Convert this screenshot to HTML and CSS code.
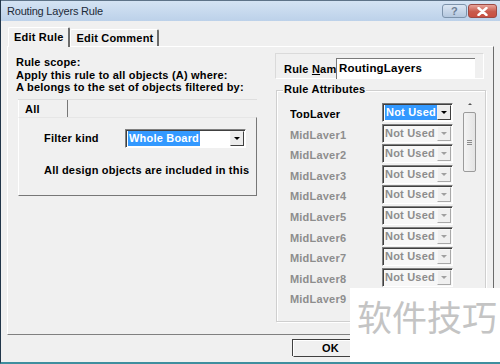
FILE: index.html
```html
<!DOCTYPE html>
<html lang="en">
<head>
    <meta charset="UTF-8">
    <meta name="viewport" content="width=device-width, initial-scale=1.0">
    <title>Routing Layers Rule</title>
    <link rel="stylesheet" href="styles.css">
</head>
<body>
    <div class="dialog">
        <!-- Title bar -->
        <div class="titlebar">
            <span class="title">Routing Layers Rule</span>
            <div class="caption-buttons">
                <div class="cap-btn cap-help">?</div>
                <div class="cap-btn cap-close">
                    <svg width="11" height="9" viewBox="0 0 11 9">
                        <path d="M1.5 1 L9.5 8 M9.5 1 L1.5 8" stroke="#fff" stroke-width="2.4" stroke-linecap="round"/>
                    </svg>
                </div>
            </div>
        </div>

        <div class="client">
            <div class="tabs">
                <div class="tab active">Edit Rule</div>
                <div class="tab">Edit Comment</div>
            </div>

            <div class="tab-page">
                <!-- Rule scope -->
                <div class="scope">
                    <div class="scope-text">
                        <div>Rule scope:</div>
                        <div>Apply this rule to all objects (A) where:</div>
                        <div>A belongs to the set of objects filtered by:</div>
                    </div>
                    <div class="filter">
                        <div class="subtabs">
                            <div class="subtab">All</div>
                        </div>
                        <div class="filter-page">
                            <div class="filter-row">
                                <span class="filter-label">Filter kind</span>
                                <div class="combo combo-wide">
                                    <div class="combo-text"><span class="selected">Whole Board</span></div>
                                    <div class="combo-arrow"><span class="tri"></span></div>
                                </div>
                            </div>
                            <div class="filter-note">All design objects are included in this</div>
                        </div>
                    </div>
                </div>

                <!-- Rule attributes -->
                <div class="attrs">
                    <div class="name-box">
                        <span class="name-label">Rule <u>N</u>am</span>
                        <div class="name-input">RoutingLayers</div>
                    </div>
                    <div class="group">
                        <div class="group-title">Rule Attributes</div>
                        <div class="group-body">
                            <div class="layer-list">
                                <div class="layer-row">
                                    <span class="layer-name">TopLayer</span>
                                    <div class="combo">
                                        <div class="combo-text"><span class="selected">Not Used</span></div>
                                        <div class="combo-arrow"><span class="tri"></span></div>
                                    </div>
                                </div>
                                <div class="layer-row disabled">
                                    <span class="layer-name">MidLayer1</span>
                                    <div class="combo">
                                        <div class="combo-text">Not Used</div>
                                        <div class="combo-arrow"><span class="tri"></span></div>
                                    </div>
                                </div>
                                <div class="layer-row disabled">
                                    <span class="layer-name">MidLayer2</span>
                                    <div class="combo">
                                        <div class="combo-text">Not Used</div>
                                        <div class="combo-arrow"><span class="tri"></span></div>
                                    </div>
                                </div>
                                <div class="layer-row disabled">
                                    <span class="layer-name">MidLayer3</span>
                                    <div class="combo">
                                        <div class="combo-text">Not Used</div>
                                        <div class="combo-arrow"><span class="tri"></span></div>
                                    </div>
                                </div>
                                <div class="layer-row disabled">
                                    <span class="layer-name">MidLayer4</span>
                                    <div class="combo">
                                        <div class="combo-text">Not Used</div>
                                        <div class="combo-arrow"><span class="tri"></span></div>
                                    </div>
                                </div>
                                <div class="layer-row disabled">
                                    <span class="layer-name">MidLayer5</span>
                                    <div class="combo">
                                        <div class="combo-text">Not Used</div>
                                        <div class="combo-arrow"><span class="tri"></span></div>
                                    </div>
                                </div>
                                <div class="layer-row disabled">
                                    <span class="layer-name">MidLayer6</span>
                                    <div class="combo">
                                        <div class="combo-text">Not Used</div>
                                        <div class="combo-arrow"><span class="tri"></span></div>
                                    </div>
                                </div>
                                <div class="layer-row disabled">
                                    <span class="layer-name">MidLayer7</span>
                                    <div class="combo">
                                        <div class="combo-text">Not Used</div>
                                        <div class="combo-arrow"><span class="tri"></span></div>
                                    </div>
                                </div>
                                <div class="layer-row disabled">
                                    <span class="layer-name">MidLayer8</span>
                                    <div class="combo">
                                        <div class="combo-text">Not Used</div>
                                        <div class="combo-arrow"><span class="tri"></span></div>
                                    </div>
                                </div>
                                <div class="layer-row disabled">
                                    <span class="layer-name">MidLayer9</span>
                                    <div class="combo">
                                        <div class="combo-text">Not Used</div>
                                        <div class="combo-arrow"><span class="tri"></span></div>
                                    </div>
                                </div>
                            </div>
                            <div class="scrollbar">
                                <span class="scroll-up"></span>
                                <div class="scroll-thumb">
                                    <span class="grip"></span>
                                    <span class="grip"></span>
                                    <span class="grip"></span>
                                </div>
                            </div>
                        </div>
                    </div>
                </div>
            </div>

            <div class="footer">
                <div class="btn">OK</div>
                <div class="btn">Cancel</div>
            </div>
        </div>

        <!-- watermark overlay (over the picture) -->
        <div class="watermark">软件技巧</div>
    </div>
</body>
</html>
```

FILE: styles.css
```css
/* Routing Layers Rule dialog */

body {
    margin: 0;
    width: 500px;
    height: 364px;
    overflow: hidden;
    background: #f0f0f0;
    font-family: "Liberation Sans", Arial, sans-serif;
    font-size: 11px;
    font-weight: bold;
    letter-spacing: 0.2px;
    color: #000;
}

.dialog {
    position: relative;
    height: 364px;
    box-sizing: border-box;
    border-left: 1px solid #22364a;
    border-bottom: 2px solid #3f8e9e;
    background: #f0f0f0;
    overflow: hidden;
}

/* Title bar */
.titlebar {
    height: 21px;
    box-sizing: border-box;
    border-top: 1px solid #5e7388;
    background: linear-gradient(#d4e3f3, #bcd1e9);
    display: flex;
    align-items: center;
    padding-left: 6px;
}

.title {
    font-weight: normal;
    letter-spacing: -0.2px;
    color: #1c2a38;
    flex: 1;
}

.caption-buttons {
    display: flex;
    gap: 1px;
    margin-right: 3px;
    align-self: flex-start;
    margin-top: 3px;
}

.cap-btn {
    height: 14px;
    box-sizing: border-box;
    border: 1px solid #7d93ab;
    border-radius: 3px;
    display: flex;
    align-items: center;
    justify-content: center;
}

.cap-help {
    width: 25px;
    background: linear-gradient(#dbe6f3, #b4c7de);
    color: #6d7f95;
    font-size: 11px;
}

.cap-close {
    width: 29px;
    border-color: #9c4a44;
    background: linear-gradient(#e8a59b, #c85a4c 55%, #c94f41);
}

/* Client area */
.client {
    padding: 6px 6px 0 6px;
}

.tabs {
    display: flex;
    align-items: flex-end;
    height: 19px;
    padding-left: 1px;
}

.tab {
    height: 17px;
    box-sizing: border-box;
    padding: 2px 4px 0 5px;
    border-top: 1px solid #fff;
    border-left: 1px solid #fff;
    border-right: 2px solid #6b6b6b;
    border-radius: 2px 2px 0 0;
    line-height: 13px;
}

.tab.active {
    height: 20px;
    padding: 3px 5px 0 5px;
    margin-bottom: -1px;
    position: relative;
    z-index: 1;
    background: #f0f0f0;
}

.tab-page {
    height: 289px;
    box-sizing: border-box;
    border: 1px solid;
    border-color: #fff #6b6b6b #808080 #fff;
    display: grid;
    grid-template-columns: 250px 1fr;
    gap: 9px;
    padding: 9px 3px 0 8px;
}

/* Left: rule scope */
.scope-text {
    line-height: 12.5px;
}

.filter {
    margin-top: 5px;
    margin-left: 2px;
    border-top: 1px solid #dedede;
    width: 239px;
}

.subtabs {
    display: flex;
    height: 17px;
}

.subtab {
    width: 50px;
    box-sizing: border-box;
    padding: 3px 0 0 6px;
    border-left: 1px solid #fff;
    border-right: 1px solid #777;
}

.filter-page {
    height: 79px;
    box-sizing: border-box;
    border: 1px solid;
    border-color: #fff #777 #777 #fff;
    border-top-color: #e6e6e6;
    padding: 11px 0 0 25px;
}

.filter-row {
    display: flex;
    align-items: center;
}

.filter-label {
    width: 81px;
}

.filter-note {
    margin-top: 16px;
    white-space: nowrap;
}

/* Combo boxes */
.combo {
    width: 71px;
    height: 19px;
    box-sizing: border-box;
    border: 1px solid;
    border-color: #808080 #fff #fff #808080;
    box-shadow: inset 1px 1px 0 #404040;
    background: #fff;
    display: flex;
    padding: 1px 1px 1px 2px;
}

.combo-wide {
    width: 121px;
}

.combo-text {
    flex: 1;
    line-height: 15px;
    white-space: nowrap;
    overflow: hidden;
}

.selected {
    background: #3399ff;
    color: #fff;
    padding: 0 1px;
    display: inline-block;
    line-height: 15px;
}

.combo-arrow {
    width: 14px;
    box-sizing: border-box;
    border: 1px solid;
    border-color: #f0f0f0 #404040 #404040 #f0f0f0;
    background: #ececec;
    display: flex;
    align-items: center;
    justify-content: center;
}

.tri {
    width: 0;
    height: 0;
    border-left: 3px solid transparent;
    border-right: 3px solid transparent;
    border-top: 3px solid #000;
}

/* Right: attributes */
.attrs {
    margin-top: -3px;
}

.name-box {
    height: 26px;
    margin-right: 6px;
    box-sizing: border-box;
    border: 1px solid;
    border-color: #dadada #fff #fff #dadada;
    display: flex;
    align-items: flex-start;
    padding-left: 8px;
}

.name-label {
    width: 52px;
    overflow: hidden;
    white-space: nowrap;
    margin-top: 9px;
}

.name-input {
    width: 139px;
    height: 21px;
    margin-top: 4px;
    box-sizing: border-box;
    border-top: 1px solid #7a7a7a;
    border-left: 1px solid #7a7a7a;
    background: #fff;
    padding: 3px 0 0 2px;
    font-size: 11.5px;
}

.group {
    margin-top: 4px;
    margin-left: 1px;
    margin-right: 4px;
    position: relative;
}

.group-title {
    position: relative;
    z-index: 1;
    display: inline-block;
    margin-left: 7px;
    padding: 0 1px;
    background: #f0f0f0;
    line-height: 13px;
}

.group-body {
    margin-top: -6px;
    height: 232px;
    box-sizing: border-box;
    border: 1px solid #cfcfcf;
    box-shadow: 1px 1px 0 #fff, inset 1px 1px 0 #fff;
    display: flex;
    padding: 13px 0 0 13px;
}

.layer-list {
    width: 164px;
}

.layer-row {
    height: 20.6px;
    display: flex;
    align-items: flex-start;
}

.layer-name {
    width: 92px;
    height: 10px;
    margin-top: 4px;
    line-height: 12px;
    overflow: hidden;
}

.layer-row .combo {
    margin-top: -1px;
}

.layer-row:first-child .combo {
    border-color: #7a7a7a #fff #fff #7a7a7a;
}

.disabled .layer-name,
.disabled .combo-text {
    color: #8d8d8d;
}

.disabled .combo {
    background: #f7f7f7;
}

.disabled .combo-arrow {
    border-color: #f7f7f7 #a8a8a8 #a8a8a8 #f7f7f7;
    background: #f0f0f0;
}

.disabled .tri {
    border-top-color: #a0a0a0;
}

/* Scrollbar */
.scrollbar {
    width: 13px;
    margin-left: 9px;
    margin-top: -5px;
    display: flex;
    flex-direction: column;
    align-items: center;
}

.scroll-up {
    width: 0;
    height: 0;
    margin-top: 4px;
    border-left: 2px solid transparent;
    border-right: 2px solid transparent;
    border-bottom: 2px solid #555;
}

.scroll-thumb {
    margin-top: 7px;
    width: 13px;
    height: 60px;
    box-sizing: border-box;
    border: 1px solid #9b9b9b;
    border-radius: 2px;
    background: linear-gradient(90deg, #f4f4f4, #e4e4e4);
    display: flex;
    flex-direction: column;
    align-items: center;
    justify-content: center;
    gap: 1px;
}

.grip {
    width: 5px;
    height: 1px;
    background: #8c8c8c;
}

/* Footer */
.footer {
    display: flex;
    gap: 8px;
    padding: 5px 0 0 286px;
}

.btn {
    width: 75px;
    height: 17px;
    box-sizing: border-box;
    border: 1px solid;
    border-color: #fff #404040 #404040 #fff;
    box-shadow: -1px -1px 0 #404040;
    text-align: center;
    line-height: 15px;
}

/* watermark overlay (over the picture) */
.watermark {
    position: absolute;
    left: 349px;
    top: 288px;
    width: 151px;
    height: 76px;
    background: #fff;
    color: #c4c4c4;
    font-family: "Noto Sans CJK SC", sans-serif;
    font-weight: normal;
    font-size: 35px;
    letter-spacing: 0;
    padding: 8px 0 0 7px;
    box-sizing: border-box;
    line-height: 40px;
}
```
